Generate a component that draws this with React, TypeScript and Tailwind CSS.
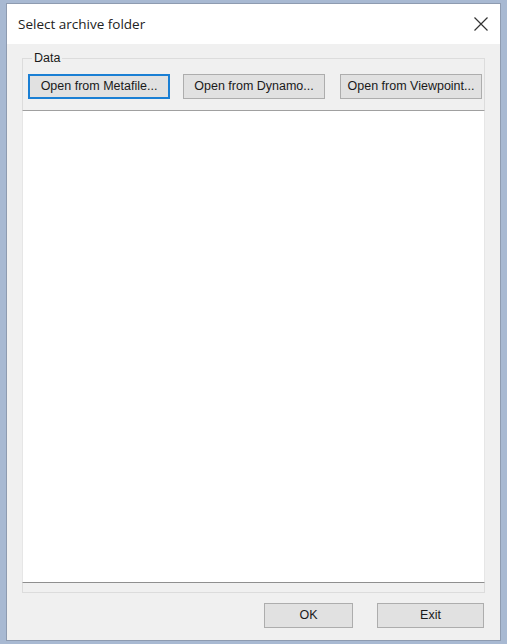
import React from 'react';

const winFont = { fontFamily: '"Liberation Sans", Arial, sans-serif' };

const CloseIcon: React.FC = () => (
  <svg width="16" height="16" viewBox="0 0 16 16" className="text-[#333]">
    <path d="M1.5 1.5 L14.5 14.5 M14.5 1.5 L1.5 14.5" stroke="currentColor" strokeWidth="1.2" fill="none" />
  </svg>
);

const WinButton: React.FC<{ label: string; focused?: boolean; className?: string }> = ({ label, focused, className = '' }) => (
  <button
    type="button"
    className={`h-[25px] bg-[#e1e1e1] text-[12.5px] text-[#1a1a1a] flex items-center justify-center ${
      focused ? 'border-2 border-[#1a7fd4]' : 'border border-[#adadad]'
    } ${className}`}
    style={winFont}
  >
    {label}
  </button>
);

const App: React.FC = () => {
  return (
    <div className="w-[507px] h-[644px] bg-[#a8b9d2] pt-[3px] pl-[6px] pr-[6px] pb-[3px]">
      <div className="w-[495px] h-[638px] border border-[#8e9bb0] flex flex-col bg-[#f0f0f0]">
        {/* Title bar */}
        <div className="h-[40px] bg-white flex items-center justify-between pl-[11px] pr-[11px] shrink-0">
          <span className="text-[13.5px] text-[#222]" style={{ fontFamily: '"Open Sans", "Noto Sans", sans-serif' }}>
            Select archive folder
          </span>
          <CloseIcon />
        </div>

        {/* Body */}
        <div className="flex-1 px-[15px] pt-[7px]">
          <fieldset className="border border-[#dcdcdc] h-[542px] w-[463px] flex flex-col">
            <legend className="ml-[9px] px-[2px] text-[12.5px] text-[#1a1a1a] leading-[14px]" style={winFont}>
              Data
            </legend>
            <div className="flex mt-[9px] pl-[5px]">
              <WinButton label="Open from Metafile..." focused className="w-[142px]" />
              <WinButton label="Open from Dynamo..." className="w-[142px] ml-[13px]" />
              <WinButton label="Open from Viewpoint..." className="w-[142px] ml-[15px]" />
            </div>
            <div className="mt-[11px] -mx-px h-[473px] bg-white border-t border-b border-t-[#a0a0a0] border-b-[#8f8f8f] border-x border-x-[#e6e6e6]" />
          </fieldset>

          <div className="flex justify-end gap-[24px] mt-[10px] pr-[1px]">
            <WinButton label="OK" className="w-[89px]" />
            <WinButton label="Exit" className="w-[107px]" />
          </div>
        </div>
      </div>
    </div>
  );
};

export default App;
